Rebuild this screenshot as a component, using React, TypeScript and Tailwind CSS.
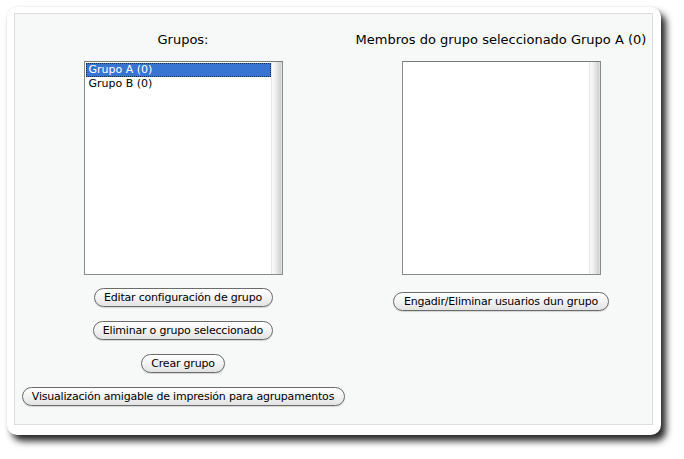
import React from "react";

const font = { fontFamily: '"DejaVu Sans", "Liberation Sans", sans-serif' };

function PillButton({ label, width }: { label: string; width: string }) {
  return (
    <button
      type="button"
      className={`${width} h-[19px] rounded-full border border-[#6b6b6b] bg-[linear-gradient(to_bottom,#ffffff_0%,#f3f3f3_50%,#e2e2e2_100%)] text-[11px] leading-[17px] tracking-[-0.2px] text-black whitespace-nowrap shadow-[0_1px_1px_rgba(0,0,0,0.15)]`}
    >
      {label}
    </button>
  );
}

function ListBox({ items, selected }: { items: string[]; selected?: number }) {
  return (
    <div className="w-[199px] h-[214px] border border-[#8a8a8a] border-t-[#7a7a7a] bg-white flex">
      <div className="flex-1 pt-[1px] pl-[1px]">
        {items.map((item, i) => (
          <div
            key={item}
            className={
              i === selected
                ? "h-[14px] pl-[3px] text-[11px] leading-[13px] text-white bg-[#3874d2] outline outline-1 outline-dotted outline-[#1a2a50] -outline-offset-1"
                : "h-[13px] pl-[3px] text-[11px] leading-[13px] text-black"
            }
          >
            {item}
          </div>
        ))}
      </div>
      <div className="w-[11px] h-full border-l border-[#e6e6e6] bg-[linear-gradient(to_right,#fbfbfb_0%,#efefef_35%,#d2d2d2_85%,#e8e8e8_100%)]" />
    </div>
  );
}

export default function App() {
  return (
    <div className="min-h-screen bg-white pt-[7px] pl-[7px]" style={font}>
      <div className="w-[654px] h-[428px] rounded-[10px] bg-white pl-[7px] pt-[6px] pr-[8px] pb-[10px] shadow-[5px_6px_7px_rgba(0,0,0,0.85),0_0_3px_rgba(0,0,0,0.08)]">
        <div className="h-full border border-[#dddddd] bg-[#f7f9f9] flex">
          {/* groups column */}
          <div className="w-[336px] flex flex-col items-center pt-[18px]">
            <div className="text-[13px] leading-[16px] text-black h-[16px]">Grupos:</div>
            <div className="mt-[13px]">
              <ListBox items={["Grupo A (0)", "Grupo B (0)"]} selected={0} />
            </div>
            <div className="mt-[13px] flex flex-col items-center gap-[14px]">
              <PillButton label="Editar configuración de grupo" width="w-[179px]" />
              <PillButton label="Eliminar o grupo seleccionado" width="w-[180px]" />
              <PillButton label="Crear grupo" width="w-[84px]" />
              <PillButton label="Visualización amigable de impresión para agrupamentos" width="w-[323px]" />
            </div>
          </div>
          {/* members column */}
          <div className="w-[300px] flex flex-col items-center pt-[18px]">
            <div className="text-[13px] leading-[16px] text-black h-[16px] whitespace-nowrap">
              Membros do grupo seleccionado Grupo A (0)
            </div>
            <div className="mt-[13px]">
              <ListBox items={[]} />
            </div>
            <div className="mt-[13px]">
              <PillButton label="Engadir/Eliminar usuarios dun grupo" width="w-[216px]" />
            </div>
          </div>
        </div>
      </div>
    </div>
  );
}
